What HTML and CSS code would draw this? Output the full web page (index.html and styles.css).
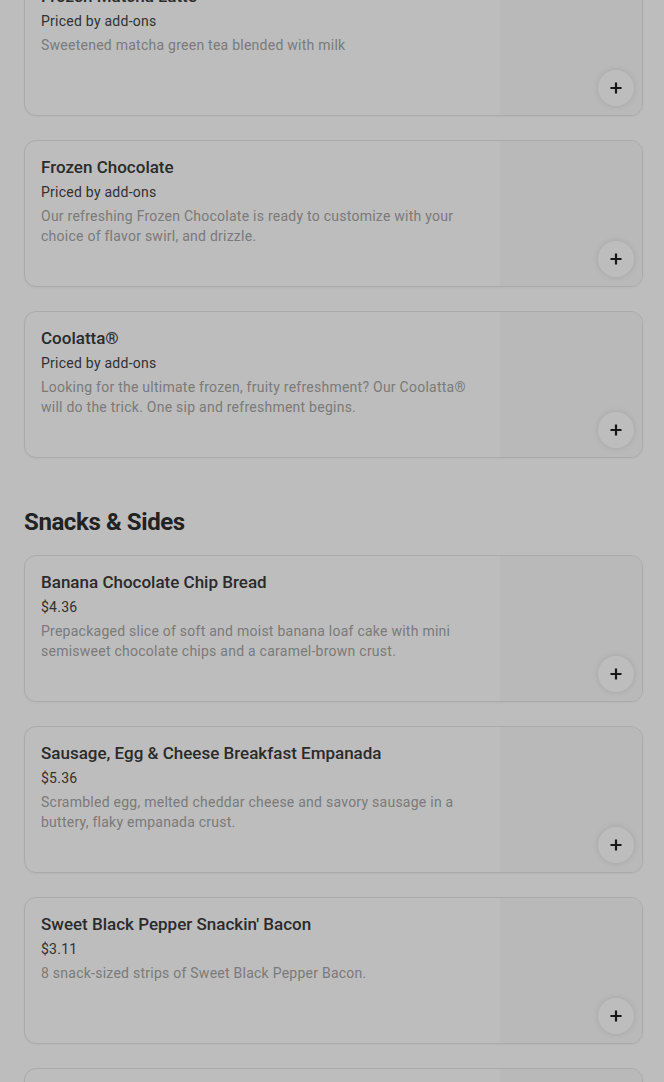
FILE: index.html
```html
<!DOCTYPE html>
<html lang="en">
<head>
<meta charset="utf-8">
<title>Menu</title>
<link rel="stylesheet" href="styles.css">
</head>
<body>
<main class="menu">
  <section class="section">
    <div class="list">
      <article class="card">
        <div class="info">
          <h3 class="title">Frozen Matcha Latte</h3>
          <p class="price">Priced by add-ons</p>
          <p class="desc">Sweetened matcha green tea blended with milk</p>
        </div>
        <div class="media"><button class="add" aria-label="Add"><svg viewBox="0 0 12 12" width="12" height="12"><path d="M6 0.5v11M0.5 6h11" stroke="#1f1f1f" stroke-width="2.2"/></svg></button></div>
      </article>
      <article class="card">
        <div class="info">
          <h3 class="title">Frozen Chocolate</h3>
          <p class="price">Priced by add-ons</p>
          <p class="desc">Our refreshing Frozen Chocolate is ready to customize with your choice of flavor swirl, and drizzle.</p>
        </div>
        <div class="media"><button class="add" aria-label="Add"><svg viewBox="0 0 12 12" width="12" height="12"><path d="M6 0.5v11M0.5 6h11" stroke="#1f1f1f" stroke-width="2.2"/></svg></button></div>
      </article>
      <article class="card">
        <div class="info">
          <h3 class="title">Coolatta®</h3>
          <p class="price">Priced by add-ons</p>
          <p class="desc">Looking for the ultimate frozen, fruity refreshment? Our Coolatta® will do the trick. One sip and refreshment begins.</p>
        </div>
        <div class="media"><button class="add" aria-label="Add"><svg viewBox="0 0 12 12" width="12" height="12"><path d="M6 0.5v11M0.5 6h11" stroke="#1f1f1f" stroke-width="2.2"/></svg></button></div>
      </article>
    </div>
  </section>

  <section class="section">
    <h2 class="heading">Snacks &amp; Sides</h2>
    <div class="list">
      <article class="card">
        <div class="info">
          <h3 class="title">Banana Chocolate Chip Bread</h3>
          <p class="price">$4.36</p>
          <p class="desc">Prepackaged slice of soft and moist banana loaf cake with mini semisweet chocolate chips and a caramel-brown crust.</p>
        </div>
        <div class="media"><button class="add" aria-label="Add"><svg viewBox="0 0 12 12" width="12" height="12"><path d="M6 0.5v11M0.5 6h11" stroke="#1f1f1f" stroke-width="2.2"/></svg></button></div>
      </article>
      <article class="card">
        <div class="info">
          <h3 class="title">Sausage, Egg &amp; Cheese Breakfast Empanada</h3>
          <p class="price">$5.36</p>
          <p class="desc">Scrambled egg, melted cheddar cheese and savory sausage in a buttery, flaky empanada crust.</p>
        </div>
        <div class="media"><button class="add" aria-label="Add"><svg viewBox="0 0 12 12" width="12" height="12"><path d="M6 0.5v11M0.5 6h11" stroke="#1f1f1f" stroke-width="2.2"/></svg></button></div>
      </article>
      <article class="card">
        <div class="info">
          <h3 class="title">Sweet Black Pepper Snackin' Bacon</h3>
          <p class="price">$3.11</p>
          <p class="desc">8 snack-sized strips of Sweet Black Pepper Bacon.</p>
        </div>
        <div class="media"><button class="add" aria-label="Add"><svg viewBox="0 0 12 12" width="12" height="12"><path d="M6 0.5v11M0.5 6h11" stroke="#1f1f1f" stroke-width="2.2"/></svg></button></div>
      </article>
      <article class="card card-next">
        <div class="info"></div>
        <div class="media"></div>
      </article>
    </div>
  </section>
</main>
<div class="backdrop"></div>
</body>
</html>
```

FILE: styles.css
```css
* { box-sizing: border-box; }

html, body {
  margin: 0;
  padding: 0;
  background: #ffffff;
  font-family: Roboto, "Liberation Sans", Arial, sans-serif;
  color: #222222;
  overflow: hidden;
}

.menu {
  margin-top: -31px;
  padding: 0 21px 0 24px;
}

.list {
  display: flex;
  flex-direction: column;
  gap: 24px;
}

.heading {
  margin: 0;
  padding-top: 48px;
  margin-bottom: 17px;
  font-size: 24px;
  line-height: 32px;
  font-weight: 700;
  letter-spacing: -0.4px;
  color: #2e2e2e;
}

.card {
  display: flex;
  min-height: 147px;
  border: 1px solid #e6e6e6;
  border-radius: 12px;
  background: #ffffff;
  box-shadow: 0 1px 2px rgba(0, 0, 0, 0.04);
  overflow: hidden;
}

.info {
  flex: 1;
  min-width: 0;
  padding: 16px 16px 16px 16px;
}

.title {
  margin: 0;
  font-size: 17px;
  line-height: 20px;
  font-weight: 500;
  color: #3a3a3a;
}

.price {
  margin: 5px 0 0;
  font-size: 14px;
  line-height: 20px;
  letter-spacing: 0.25px;
  color: #444444;
}

.desc {
  margin: 4px 0 0;
  font-size: 14px;
  line-height: 20px;
  letter-spacing: 0.25px;
  color: #a6a6a6;
}

.media {
  position: relative;
  flex: 0 0 142px;
  background: #fafafa;
}

.add {
  position: absolute;
  right: 8px;
  bottom: 9px;
  width: 36px;
  height: 36px;
  border: 0;
  padding: 0;
  border-radius: 50%;
  background: #ffffff;
  box-shadow: 0 0 6px rgba(0, 0, 0, 0.12);
  display: flex;
  align-items: center;
  justify-content: center;
}

.backdrop {
  position: fixed;
  inset: 0;
  background: rgba(0, 0, 0, 0.26);
}
```
